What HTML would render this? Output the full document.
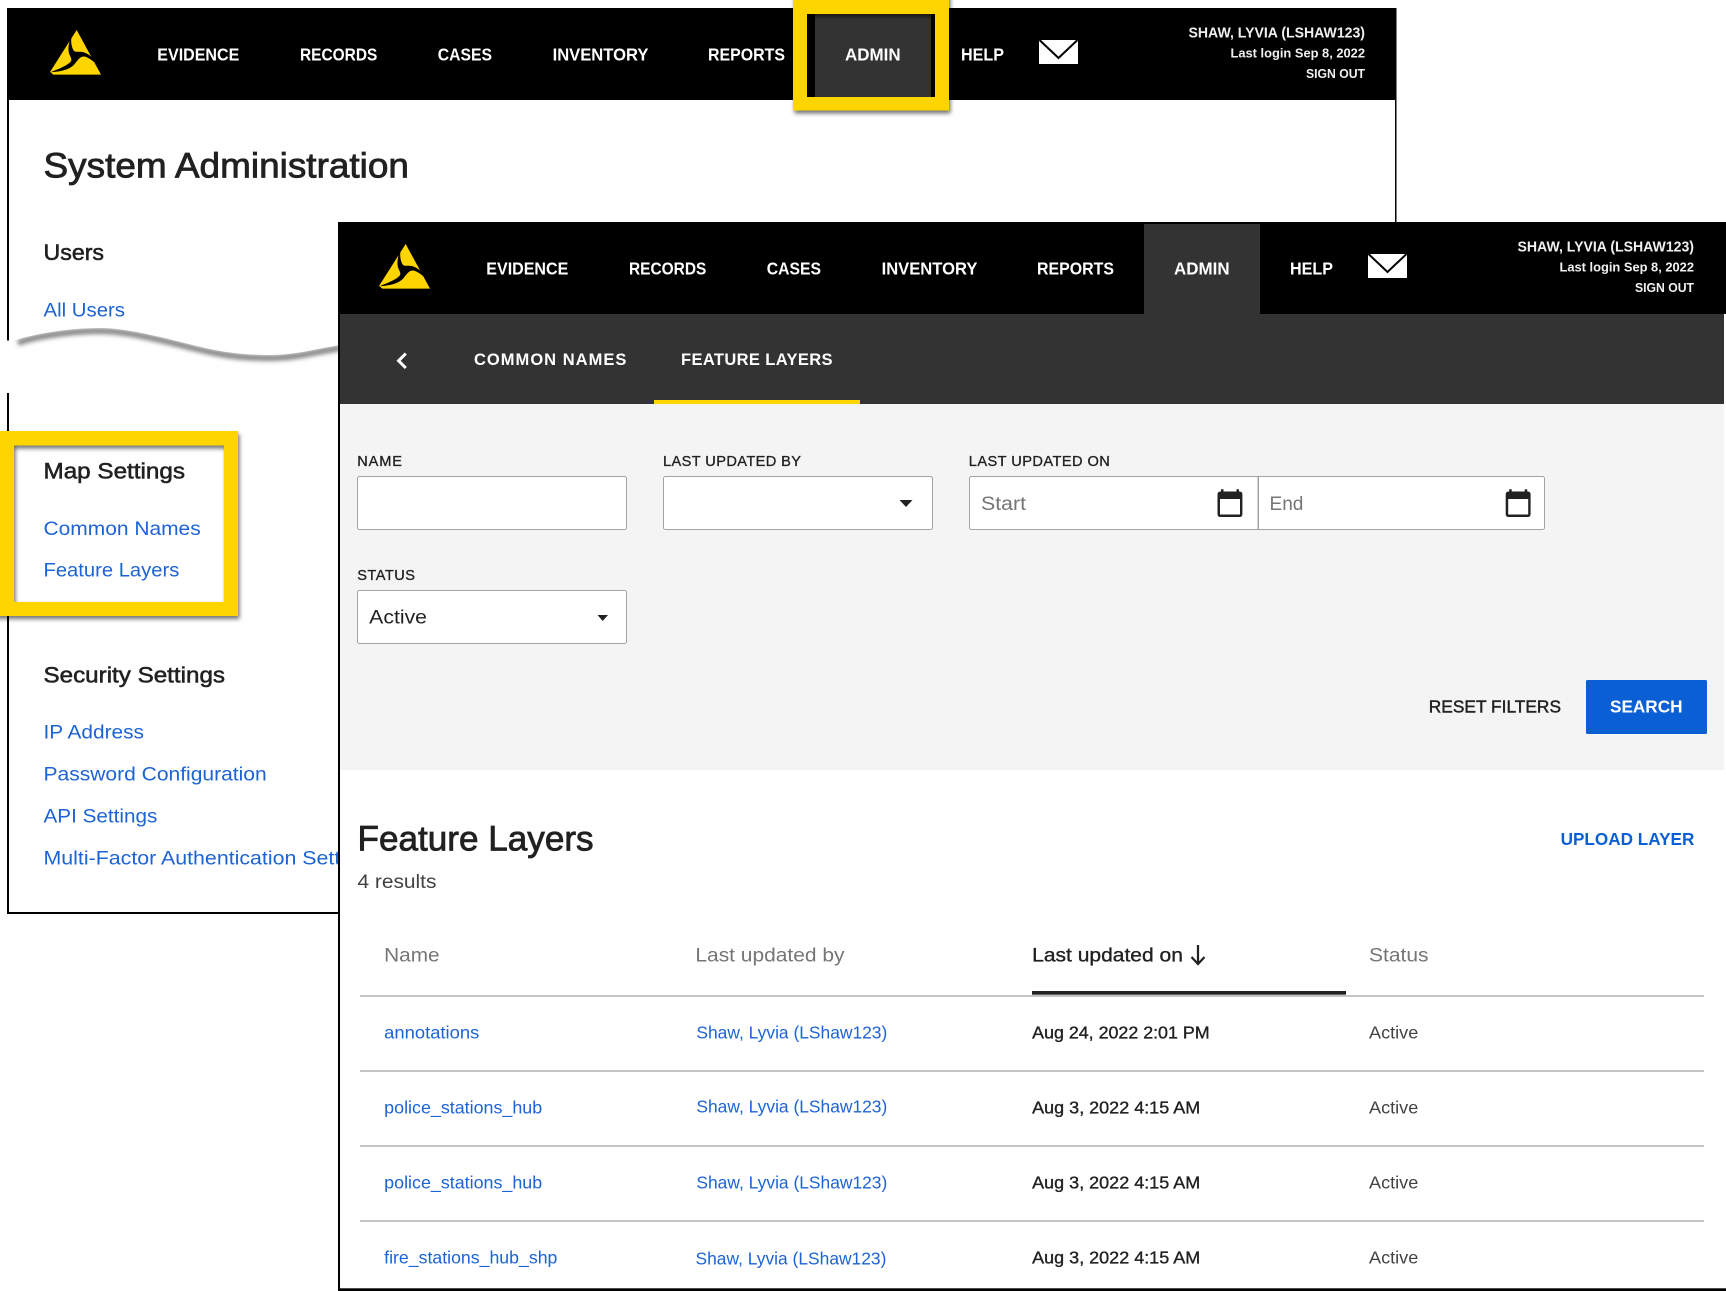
<!DOCTYPE html>
<html lang="en">
<head>
<meta charset="utf-8">
<title>System Administration - Feature Layers</title>
<style>
html,body{margin:0;padding:0;background:#fff;width:1726px;height:1291px;overflow:hidden}
svg{display:block;position:absolute;left:0;top:0}
text{font-family:"Liberation Sans",Arial,sans-serif;white-space:pre}
.nav{font-size:17.6px;font-weight:700;fill:#fff}
.usr{font-weight:700;fill:#f0f0f0}
.tab{font-size:16.5px;font-weight:700;fill:#fff}
.h1{font-size:35.2px;fill:#212121;stroke:#212121;stroke-width:.8}
.h2{font-size:22px;fill:#212121;stroke:#212121;stroke-width:.55}
.lk{font-size:19.8px;fill:#1c63d6}
.lb{font-size:14.6px;fill:#212121;stroke:#212121;stroke-width:.3}
.ph{font-size:19.8px;fill:#757575}
.th{font-size:19.8px;fill:#757575}
.rl{font-size:17.6px;fill:#1c63d6}
.rd{font-size:17.6px;fill:#212121;stroke:#212121;stroke-width:.35}
.rs{font-size:17.6px;fill:#424242}
</style>
</head>
<body>
<svg xmlns="http://www.w3.org/2000/svg" width="1726" height="1291" viewBox="0 0 1726 1291">
<defs>
<filter id="sh" x="-10%" y="-10%" width="125%" height="125%"><feDropShadow dx="1.5" dy="3" stdDeviation="2" flood-color="#000" flood-opacity=".55"/></filter>
<filter id="bl" x="-5%" y="-50%" width="110%" height="200%"><feGaussianBlur stdDeviation="2"/></filter>
</defs>

<!-- background window -->
<rect x="7" y="8" width="1389.5" height="92" fill="#000"/>
<rect x="7" y="100" width="2" height="240.5" fill="#000"/>
<rect x="7" y="393" width="2" height="521" fill="#000"/>
<rect x="7" y="912" width="331" height="2" fill="#000"/>
<rect x="1395" y="100" width="1.5" height="122" fill="#000"/>

<!-- logo 1 -->
<g transform="scale(.33333)">
<path d="M230,90 L303,224 L160,224 L150,216 Z" fill="#ffd500"/>
<path d="M216,104 C206,125 202,150 209,165 C214,176 216,180 212,185 C203,196 175,208 150,217 C180,215 203,210 218,198 C230,188 238,166 255,170 C268,174 285,188 296,198 C282,176 270,163 252,157 C236,152 224,160 219,148 C213,135 212,118 216,104 Z" fill="#000"/>
</g>

<text class="nav" x="157.3" y="60.6" textLength="82" lengthAdjust="spacingAndGlyphs">EVIDENCE</text>
<text class="nav" x="300" y="60.6" textLength="77.3" lengthAdjust="spacingAndGlyphs">RECORDS</text>
<text class="nav" x="437.7" y="60.6" textLength="54.3" lengthAdjust="spacingAndGlyphs">CASES</text>
<text class="nav" x="552.6" y="60.6" textLength="95.8" lengthAdjust="spacingAndGlyphs">INVENTORY</text>
<text class="nav" x="708" y="60.6" textLength="77" lengthAdjust="spacingAndGlyphs">REPORTS</text>
<rect x="815" y="14" width="116" height="83" fill="#333"/>
<text class="nav" x="845" y="60.6" textLength="55.6" lengthAdjust="spacingAndGlyphs">ADMIN</text>
<text class="nav" x="961" y="60.6" textLength="43" lengthAdjust="spacingAndGlyphs">HELP</text>
<rect x="1039" y="40" width="39" height="24" fill="#fff"/>
<path d="M1039.5,40 L1058.5,58 L1077.5,40" fill="none" stroke="#000" stroke-width="2"/>
<text class="usr" font-size="14.3" x="1188.5" y="37.3" textLength="176.5" lengthAdjust="spacingAndGlyphs">SHAW, LYVIA (LSHAW123)</text>
<text class="usr" font-size="13.2" x="1230.5" y="57.3" textLength="134.5" lengthAdjust="spacingAndGlyphs">Last login Sep 8, 2022</text>
<text class="usr" font-size="13.2" x="1306" y="77.9" textLength="59" lengthAdjust="spacingAndGlyphs">SIGN OUT</text>

<path filter="url(#sh)" fill-rule="evenodd" fill="#ffd500" d="M793,-10 H949 V110.5 H793 Z M807,14 V97 H935 V14 Z"/>

<text class="h1" x="43.5" y="177.7" textLength="365.5" lengthAdjust="spacingAndGlyphs">System Administration</text>
<text class="h2" x="43.5" y="260" textLength="60.5" lengthAdjust="spacingAndGlyphs">Users</text>

<!-- torn paper edge -->
<path filter="url(#bl)" transform="translate(0,3)" d="M18,340 C30,335 65,328 100,328 C135,328 180,343 215,350 C235,354 255,355 270,355 C295,355 315,349 340,345" fill="none" stroke="#858585" stroke-width="6"/>
<path d="M12,341 C30,335 65,328 100,328 C135,328 180,343 215,350 C235,354 255,355 270,355 C295,355 315,349 340,345 L340,300 L12,300 Z" fill="#fff"/>
<text class="lk" x="43.5" y="316.7" textLength="81.5" lengthAdjust="spacingAndGlyphs">All Users</text>

<path filter="url(#sh)" fill-rule="evenodd" fill="#ffd500" d="M-10,431 H238 V616 H-10 Z M14,445.5 V602 H224 V445.5 Z"/>
<text class="h2" x="43.5" y="478.3" textLength="141.5" lengthAdjust="spacingAndGlyphs">Map Settings</text>
<text class="lk" x="43.5" y="535" textLength="157.2" lengthAdjust="spacingAndGlyphs">Common Names</text>
<text class="lk" x="43.5" y="576.7" textLength="135.8" lengthAdjust="spacingAndGlyphs">Feature Layers</text>

<text class="h2" x="43.5" y="682.7" textLength="181.5" lengthAdjust="spacingAndGlyphs">Security Settings</text>
<text class="lk" x="43.5" y="738.7" textLength="100.5" lengthAdjust="spacingAndGlyphs">IP Address</text>
<text class="lk" x="43.5" y="780.7" textLength="223.2" lengthAdjust="spacingAndGlyphs">Password Configuration</text>
<text class="lk" x="43.5" y="822.7" textLength="113.8" lengthAdjust="spacingAndGlyphs">API Settings</text>
<text class="lk" x="43.5" y="864.7" textLength="336" lengthAdjust="spacingAndGlyphs">Multi-Factor Authentication Settings</text>

<!-- foreground window -->
<rect x="338" y="222" width="1388" height="1069" fill="#fff"/>
<rect x="338" y="222" width="2" height="1069" fill="#000"/>
<rect x="338" y="222" width="1388" height="92" fill="#000"/>
<rect x="338" y="1288.3" width="1388" height="2.7" fill="#000"/>
<rect x="340" y="314" width="1384" height="90" fill="#333"/>
<rect x="340" y="404" width="1384" height="366" fill="#f4f4f4"/>

<g transform="translate(329,214) scale(.33333)">
<path d="M230,90 L303,224 L160,224 L150,216 Z" fill="#ffd500"/>
<path d="M216,104 C206,125 202,150 209,165 C214,176 216,180 212,185 C203,196 175,208 150,217 C180,215 203,210 218,198 C230,188 238,166 255,170 C268,174 285,188 296,198 C282,176 270,163 252,157 C236,152 224,160 219,148 C213,135 212,118 216,104 Z" fill="#000"/>
</g>

<text class="nav" x="486.3" y="274.6" textLength="82" lengthAdjust="spacingAndGlyphs">EVIDENCE</text>
<text class="nav" x="629" y="274.6" textLength="77.3" lengthAdjust="spacingAndGlyphs">RECORDS</text>
<text class="nav" x="766.7" y="274.6" textLength="54.3" lengthAdjust="spacingAndGlyphs">CASES</text>
<text class="nav" x="881.6" y="274.6" textLength="95.8" lengthAdjust="spacingAndGlyphs">INVENTORY</text>
<text class="nav" x="1037" y="274.6" textLength="77" lengthAdjust="spacingAndGlyphs">REPORTS</text>
<rect x="1144" y="224" width="116" height="90" fill="#333"/>
<text class="nav" x="1174" y="274.6" textLength="55.6" lengthAdjust="spacingAndGlyphs">ADMIN</text>
<text class="nav" x="1290" y="274.6" textLength="43" lengthAdjust="spacingAndGlyphs">HELP</text>
<rect x="1368" y="254" width="39" height="24" fill="#fff"/>
<path d="M1368.5,254 L1387.5,272 L1406.5,254" fill="none" stroke="#000" stroke-width="2"/>
<text class="usr" font-size="14.3" x="1517.5" y="251.3" textLength="176.5" lengthAdjust="spacingAndGlyphs">SHAW, LYVIA (LSHAW123)</text>
<text class="usr" font-size="13.2" x="1559.5" y="271.3" textLength="134.5" lengthAdjust="spacingAndGlyphs">Last login Sep 8, 2022</text>
<text class="usr" font-size="13.2" x="1635" y="291.9" textLength="59" lengthAdjust="spacingAndGlyphs">SIGN OUT</text>

<path d="M405.8,353.5 L398.6,360.8 L405.8,368" fill="none" stroke="#fff" stroke-width="3"/>
<text class="tab" x="474" y="365" textLength="152.4" lengthAdjust="spacing">COMMON NAMES</text>
<text class="tab" x="681" y="365" textLength="151.5" lengthAdjust="spacing">FEATURE LAYERS</text>
<rect x="654" y="400" width="206" height="4" fill="#ffd500"/>

<!-- filters -->
<text class="lb" x="357.2" y="466" textLength="44.8" lengthAdjust="spacing">NAME</text>
<rect x="357.5" y="476.5" width="269" height="53" rx="2" fill="#fff" stroke="#a3a3a3" stroke-width="1"/>
<text class="lb" x="663" y="466" textLength="138" lengthAdjust="spacing">LAST UPDATED BY</text>
<rect x="663.5" y="476.5" width="269" height="53" rx="2" fill="#fff" stroke="#a3a3a3" stroke-width="1"/>
<path d="M899.5,500 H912.5 L906,507 Z" fill="#212121"/>
<text class="lb" x="968.8" y="466" textLength="141" lengthAdjust="spacing">LAST UPDATED ON</text>
<rect x="969.5" y="476.5" width="575" height="53" rx="2" fill="#fff" stroke="#a3a3a3" stroke-width="1"/>
<rect x="1257.5" y="477" width="1.5" height="52" fill="#a3a3a3"/>
<text class="ph" x="981" y="510" textLength="45" lengthAdjust="spacingAndGlyphs">Start</text>
<text class="ph" x="1269.5" y="510" textLength="33.9" lengthAdjust="spacingAndGlyphs">End</text>

<g fill="#222">
<path fill-rule="evenodd" d="M1221,491.5 V489.3 H1223.5 V491.5 H1236.5 V489.3 H1239 V491.5 H1239.5 Q1242.4,491.5 1242.4,494.5 V514 Q1242.4,517 1239.5,517 H1220.5 Q1217.5,517 1217.5,514 V494.5 Q1217.5,491.5 1220.5,491.5 Z M1220,499 V514.5 H1240 V499 Z"/>
<path fill-rule="evenodd" d="M1509.2,491.5 V489.3 H1511.7 V491.5 H1524.7 V489.3 H1527.2 V491.5 H1527.7 Q1530.6,491.5 1530.6,494.5 V514 Q1530.6,517 1527.7,517 H1508.7 Q1505.7,517 1505.7,514 V494.5 Q1505.7,491.5 1508.7,491.5 Z M1508.2,499 V514.5 H1528.2 V499 Z"/>
</g>

<text class="lb" x="357.2" y="580" textLength="57.8" lengthAdjust="spacing">STATUS</text>
<rect x="357.5" y="590.5" width="269" height="53" rx="2" fill="#fff" stroke="#a3a3a3" stroke-width="1"/>
<text x="369.2" y="623.5" font-size="19.8" fill="#212121" textLength="57.8" lengthAdjust="spacingAndGlyphs">Active</text>
<path d="M597.5,615 H608 L602.7,621 Z" fill="#212121"/>

<text class="nav" style="fill:#212121;font-weight:400;stroke:#212121;stroke-width:.45" x="1428.8" y="712.6" textLength="132.2" lengthAdjust="spacingAndGlyphs">RESET FILTERS</text>
<rect x="1586" y="680" width="121" height="54" rx="1.5" fill="#0b5fd5"/>
<text class="nav" x="1610" y="712.6" textLength="72.5" lengthAdjust="spacingAndGlyphs">SEARCH</text>

<!-- results -->
<text class="h1" x="357.5" y="850.7" textLength="236.1" lengthAdjust="spacingAndGlyphs">Feature Layers</text>
<text x="357.5" y="888" font-size="19.8" fill="#424242" textLength="78.9" lengthAdjust="spacingAndGlyphs">4 results</text>
<text class="nav" style="fill:#0b5fd5" x="1560.6" y="845" textLength="133.8" lengthAdjust="spacingAndGlyphs">UPLOAD LAYER</text>

<text class="th" x="384.2" y="961.6" textLength="55.4" lengthAdjust="spacingAndGlyphs">Name</text>
<text class="th" x="695.4" y="961.6" textLength="149.1" lengthAdjust="spacingAndGlyphs">Last updated by</text>
<text class="th" style="fill:#212121;stroke:#212121;stroke-width:.35" x="1032.2" y="961.6" textLength="150.7" lengthAdjust="spacingAndGlyphs">Last updated on</text>
<path d="M1198,945 V963 M1191.5,957 L1198,964 L1204.5,957" fill="none" stroke="#212121" stroke-width="2.2"/>
<text class="th" x="1369" y="961.6" textLength="59.5" lengthAdjust="spacingAndGlyphs">Status</text>
<rect x="1032" y="991" width="314" height="3.7" fill="#212121"/>

<rect x="360" y="995" width="1344" height="2" fill="#c4c4c4"/>
<rect x="360" y="1070" width="1344" height="2" fill="#c4c4c4"/>
<rect x="360" y="1145" width="1344" height="2" fill="#c4c4c4"/>
<rect x="360" y="1220" width="1344" height="2" fill="#c4c4c4"/>

<text class="rl" x="384.2" y="1038.7" textLength="95.1" lengthAdjust="spacingAndGlyphs">annotations</text>
<text class="rl" x="696.4" y="1038.7" textLength="190.9" lengthAdjust="spacingAndGlyphs">Shaw, Lyvia (LShaw123)</text>
<text class="rd" x="1032.2" y="1038.7" textLength="177.4" lengthAdjust="spacingAndGlyphs">Aug 24, 2022 2:01 PM</text>
<text class="rs" x="1369" y="1038.7" textLength="49.3" lengthAdjust="spacingAndGlyphs">Active</text>

<text class="rl" x="384.2" y="1113.7" textLength="158" lengthAdjust="spacingAndGlyphs">police_stations_hub</text>
<text class="rl" x="696.4" y="1112.7" textLength="190.9" lengthAdjust="spacingAndGlyphs">Shaw, Lyvia (LShaw123)</text>
<text class="rd" x="1032.2" y="1113.7" textLength="168" lengthAdjust="spacingAndGlyphs">Aug 3, 2022 4:15 AM</text>
<text class="rs" x="1369" y="1113.7" textLength="49.3" lengthAdjust="spacingAndGlyphs">Active</text>

<text class="rl" x="384.2" y="1188.7" textLength="158" lengthAdjust="spacingAndGlyphs">police_stations_hub</text>
<text class="rl" x="696.4" y="1188.7" textLength="190.9" lengthAdjust="spacingAndGlyphs">Shaw, Lyvia (LShaw123)</text>
<text class="rd" x="1032.2" y="1188.7" textLength="168" lengthAdjust="spacingAndGlyphs">Aug 3, 2022 4:15 AM</text>
<text class="rs" x="1369" y="1188.7" textLength="49.3" lengthAdjust="spacingAndGlyphs">Active</text>

<text class="rl" x="384.2" y="1263.7" textLength="173.2" lengthAdjust="spacingAndGlyphs">fire_stations_hub_shp</text>
<text class="rl" x="695.5" y="1264.7" textLength="190.9" lengthAdjust="spacingAndGlyphs">Shaw, Lyvia (LShaw123)</text>
<text class="rd" x="1032.2" y="1263.7" textLength="168" lengthAdjust="spacingAndGlyphs">Aug 3, 2022 4:15 AM</text>
<text class="rs" x="1369" y="1263.7" textLength="49.3" lengthAdjust="spacingAndGlyphs">Active</text>
</svg>
</body>
</html>
